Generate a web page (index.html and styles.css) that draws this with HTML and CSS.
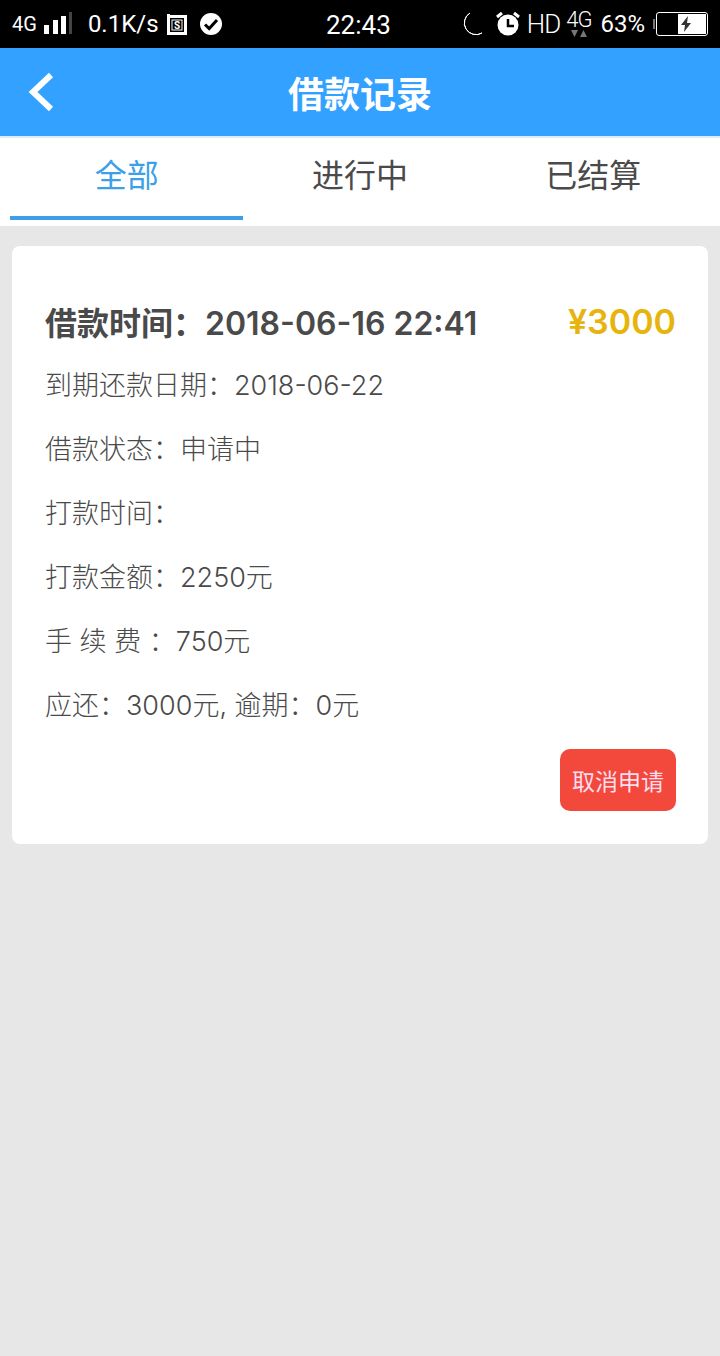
FILE: index.html
```html
<!DOCTYPE html>
<html lang="zh-CN">
<head>
  <meta charset="UTF-8">
  <title>借款记录</title>
  <link rel="stylesheet" href="styles.css">
</head>
<body>

<!-- Status bar -->
<div class="status-bar">
  <div class="status-left">
    <span class="net">4G</span>
    <svg class="signal" width="28" height="24" viewBox="0 0 28 24">
      <rect x="0" y="13" width="5" height="9" fill="#fff"/>
      <rect x="9" y="8" width="5" height="14" fill="#fff"/>
      <rect x="17" y="4" width="5" height="18" fill="#fff"/>
      <rect x="25" y="0" width="3" height="22" fill="#444"/>
    </svg>
    <span class="speed">0.1K/s</span>
    <svg class="s-icon" width="20" height="22" viewBox="0 0 20 22">
      <path d="M1.5 1v19.500h17V3.500H1.500" fill="none" stroke="#fff" stroke-width="3"/>
      <rect x="5" y="7" width="10" height="10" fill="none" stroke="#fff" stroke-width="1"/>
      <text x="10" y="15.500" text-anchor="middle" class="s-letter">S</text>
    </svg>
    <svg class="check" width="24" height="24" viewBox="0 0 24 24">
      <circle cx="12" cy="12" r="11" fill="#fff"/>
      <path d="M6 12.500l4.200 4L18 8" fill="none" stroke="#000" stroke-width="3"/>
    </svg>
  </div>
  <div class="clock">22:43</div>
  <div class="status-right">
    <svg class="moon" width="22" height="24" viewBox="0 0 22 24">
      <path d="M8 1a11.500 11.500 0 0 0 12 20A11.500 11.500 0 0 1 8 1z" fill="#fff" stroke="#fff" stroke-width="1"/>
    </svg>
    <svg class="alarm" width="24" height="26" viewBox="0 0 24 26">
      <circle cx="12" cy="14" r="10.500" fill="#fff"/>
      <path d="M12 8v7h6" fill="none" stroke="#000" stroke-width="2.500"/>
      <path d="M1 6l5-4M23 6l-5-4" stroke="#fff" stroke-width="3"/>
    </svg>
    <span class="hd">HD</span>
    <span class="net-stack">
      <span class="net-top">4G</span>
      <svg width="16" height="8" viewBox="0 0 16 8">
        <path d="M0 0h7L3.500 7zM9 7h7L12.500 0z" fill="#777"/>
      </svg>
    </span>
    <span class="battery-pct">63%</span>
    <div class="battery-tip"></div>
    <div class="battery">
      <div class="battery-fill">
        <svg width="12" height="16" viewBox="0 0 12 16">
          <path d="M8 0L1 9h4l-1 7 7-9H7z" fill="#333"/>
        </svg>
      </div>
    </div>
  </div>
</div>

<!-- Header -->
<div class="header">
  <svg class="back" width="28" height="40" viewBox="0 0 28 40">
    <path d="M24 3L6 20l18 17" fill="none" stroke="#fff" stroke-width="6"/>
  </svg>
  <h1>借款记录</h1>
</div>

<!-- Tabs -->
<div class="tabs">
  <div class="tab active">全部</div>
  <div class="tab">进行中</div>
  <div class="tab">已结算</div>
</div>

<!-- Loan record -->
<div class="card">
  <div class="card-top">
    <div class="loan-time">借款时间：2018-06-16 22:41</div>
    <div class="amount">¥3000</div>
  </div>
  <div class="row">到期还款日期：2018-06-22</div>
  <div class="row">借款状态：申请中</div>
  <div class="row">打款时间：</div>
  <div class="row">打款金额：2250元</div>
  <div class="row">手 续 费 ：750元</div>
  <div class="row">应还：3000元, 逾期：0元</div>
  <div class="card-actions">
    <button class="cancel">取消申请</button>
  </div>
</div>

</body>
</html>
```

FILE: styles.css
```css
body {
  margin: 0;
  background-color: #e7e7e7;
  font-family: Inter, "Noto Sans CJK SC", sans-serif;
  color: #4a4a4a;
}

.status-bar {
  height: 48px;
  background-color: #000;
  color: #fff;
  display: flex;
  align-items: center;
  justify-content: space-between;
  padding: 0 12px;
  box-sizing: border-box;
  position: relative;
  font-family: Roboto, sans-serif;
}

.status-left,
.status-right {
  display: flex;
  align-items: center;
}

.net {
  font-size: 20px;
  margin-right: 7px;
}

.signal {
  margin-right: 16px;
}

.speed {
  font-size: 24px;
  margin-right: 8px;
}

.s-icon {
  margin-right: 12px;
}

.s-letter {
  font-size: 10px;
  font-weight: 700;
  fill: #fff;
}

.clock {
  position: absolute;
  left: 326px;
  top: 10px;
  font-size: 26px;
}

.status-right {
  margin-right: 0;
}

.moon {
  margin-right: 12px;
}

.alarm {
  margin-right: 7px;
}

.hd {
  font-size: 26px;
  font-weight: 300;
  margin-right: 6px;
  letter-spacing: -1px;
}

.net-stack {
  display: flex;
  flex-direction: column;
  align-items: center;
  margin-right: 9px;
}

.net-top {
  font-size: 22px;
  font-weight: 300;
  line-height: 20px;
  letter-spacing: -1px;
}

.battery-pct {
  font-size: 24px;
  margin-right: 8px;
}

.battery-tip {
  width: 2px;
  height: 10px;
  background-color: #777;
  margin-right: 1px;
}

.battery {
  width: 48px;
  height: 20px;
  border: 1px solid #fff;
  border-radius: 3px;
  padding: 1px;
  display: flex;
  justify-content: flex-end;
}

.battery-fill {
  width: 28px;
  background-color: #fff;
  display: flex;
  align-items: center;
  padding-left: 2px;
  box-sizing: border-box;
}

.header {
  height: 88px;
  background-color: #33a1ff;
  border-bottom: 2px solid #d8ecfd;
  display: flex;
  align-items: center;
  justify-content: center;
  position: relative;
}

.header h1 {
  margin: 0;
  font-size: 36px;
  font-weight: 700;
  color: #fff;
}

.back {
  position: absolute;
  left: 27px;
  top: 24px;
}

.tabs {
  height: 88px;
  background-color: #fff;
  display: flex;
  padding: 0 10px;
}

.tab {
  flex: 1;
  height: 78px;
  line-height: 76px;
  text-align: center;
  font-size: 32px;
  border-bottom: 4px solid transparent;
}

.tab.active {
  color: #3d9fe8;
  border-bottom-color: #3d9fe8;
}

.card {
  margin: 20px 12px 0;
  padding: 52px 32px 32px 33px;
  height: 598px;
  box-sizing: border-box;
  background-color: #fff;
  border-radius: 8px;
}

.card-top {
  display: flex;
  justify-content: space-between;
  align-items: center;
  height: 46px;
  margin-bottom: 10px;
}

.loan-time {
  font-size: 32px;
  font-weight: 600;
}

.amount {
  font-size: 34px;
  font-weight: 600;
  color: #e6b40c;
}

.row {
  height: 64px;
  line-height: 64px;
  font-size: 27px;
  font-weight: 300;
}

.card-actions {
  display: flex;
  justify-content: flex-end;
  margin-top: 11px;
}

.cancel {
  width: 116px;
  height: 62px;
  padding: 0;
  border: none;
  border-radius: 10px;
  background-color: #f2493c;
  color: #fde;
  font-family: inherit;
  font-size: 23px;
}
```
